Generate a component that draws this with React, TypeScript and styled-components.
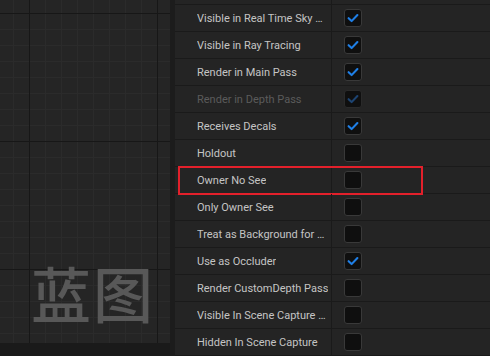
import React from 'react';
import styled, { createGlobalStyle } from 'styled-components';

const GlobalStyle = createGlobalStyle`
  html, body {
    margin: 0;
    padding: 0;
    background: #1a1a1a;
    overflow: hidden;
  }
`;

const Screen = styled.div`
  display: flex;
  width: 490px;
  height: 356px;
  overflow: hidden;
  background: #1b1b1b;
  font-family: Roboto, "Noto Sans", "Liberation Sans", sans-serif;
`;

const GraphArea = styled.div`
  width: 170px;
  flex-shrink: 0;
  display: flex;
  flex-direction: column;
`;

// grid: minor every 16px, major every 128px
const GraphCanvas = styled.div`
  height: 343px;
  display: flex;
  align-items: flex-end;
  justify-content: flex-end;
  padding: 0 15px 21px 0;
  box-sizing: border-box;
  background-color: #252525;
  background-image:
    linear-gradient(to right, #171717 1px, transparent 1px),
    linear-gradient(to bottom, #171717 1px, transparent 1px),
    linear-gradient(to right, #2b2b2b 1px, transparent 1px),
    linear-gradient(to bottom, #2b2b2b 1px, transparent 1px);
  background-size: 128px 128px, 128px 128px, 16px 16px, 16px 16px;
  background-position: 29px 13px, 29px 13px, 13px 13px, 13px 13px;
`;

const Watermark = styled.div`
  font-family: "Noto Sans CJK SC", sans-serif;
  font-size: 60px;
  font-weight: 500;
  line-height: 1;
  color: #585858;
  letter-spacing: 2px;
`;

const GraphFooter = styled.div`
  flex: 1;
  background: #1a1a1a;
`;

const Splitter = styled.div`
  width: 5px;
  flex-shrink: 0;
  background: #1c1c1c;
`;

const Panel = styled.div`
  flex: 1;
  background: #242424;
  overflow: hidden;
`;

// list is scrolled down a little, first row is cut off at the top
const RowList = styled.div`
  margin-top: -22px;
`;

const Row = styled.div<{ $highlight?: boolean }>`
  position: relative;
  display: flex;
  height: 26px;
  border-bottom: 1px solid #1a1a1a;

  ${(p) =>
    p.$highlight &&
    `
    &::after {
      content: '';
      position: absolute;
      top: -1px;
      bottom: -2px;
      left: 3px;
      width: 245px;
      box-sizing: border-box;
      border: 2px solid #e3202b;
      pointer-events: none;
    }
  `}
`;

const Label = styled.div<{ $disabled?: boolean }>`
  width: 157px;
  flex-shrink: 0;
  box-sizing: border-box;
  padding: 0 2px 0 22px;
  display: flex;
  align-items: center;
  border-right: 1px solid #1a1a1a;
  font-size: 11px;
  color: ${(p) => (p.$disabled ? '#5b5b5b' : '#c4c4c4')};

  span {
    white-space: nowrap;
    overflow: hidden;
    text-overflow: ellipsis;
  }
`;

const Value = styled.div`
  flex: 1;
  display: flex;
  align-items: center;
  padding-left: 12px;
`;

const CheckBox = styled.div<{ $disabled?: boolean }>`
  width: 18px;
  height: 18px;
  box-sizing: border-box;
  border-radius: 3px;
  background: #0f0f0f;
  border: 1px solid ${(p) => (p.$disabled ? '#2a2a2a' : '#393939')};
  display: flex;
  align-items: center;
  justify-content: center;
`;

type Prop = { label: string; checked: boolean; disabled?: boolean; highlight?: boolean };

const props: Prop[] = [
  { label: 'Visible in Reflection Captures', checked: true },
  { label: 'Visible in Real Time Sky Captures', checked: true },
  { label: 'Visible in Ray Tracing', checked: true },
  { label: 'Render in Main Pass', checked: true },
  { label: 'Render in Depth Pass', checked: true, disabled: true },
  { label: 'Receives Decals', checked: true },
  { label: 'Holdout', checked: false },
  { label: 'Owner No See', checked: false, highlight: true },
  { label: 'Only Owner See', checked: false },
  { label: 'Treat as Background for Occlusion', checked: false },
  { label: 'Use as Occluder', checked: true },
  { label: 'Render CustomDepth Pass', checked: false },
  { label: 'Visible In Scene Capture Only', checked: false },
  { label: 'Hidden In Scene Capture', checked: false },
];

const Tick: React.FC<{ disabled?: boolean }> = ({ disabled }) => (
  <svg width="14" height="14" viewBox="0 0 14 14">
    <path
      d="M2.6 7.2 L5.6 10.1 L11.4 4"
      fill="none"
      stroke={disabled ? '#1d4472' : '#1f7fe6'}
      strokeWidth="2.1"
      strokeLinecap="round"
      strokeLinejoin="round"
    />
  </svg>
);

const App: React.FC = () => {
  return (
    <>
      <GlobalStyle />
      <Screen>
        <GraphArea>
          <GraphCanvas>
            <Watermark>蓝图</Watermark>
          </GraphCanvas>
          <GraphFooter />
        </GraphArea>
        <Splitter />
        <Panel>
          <RowList>
            {props.map((p) => (
              <Row key={p.label} $highlight={p.highlight}>
                <Label $disabled={p.disabled}>
                  <span>{p.label}</span>
                </Label>
                <Value>
                  <CheckBox $disabled={p.disabled}>
                    {p.checked && <Tick disabled={p.disabled} />}
                  </CheckBox>
                </Value>
              </Row>
            ))}
          </RowList>
        </Panel>
      </Screen>
    </>
  );
};

export default App;
